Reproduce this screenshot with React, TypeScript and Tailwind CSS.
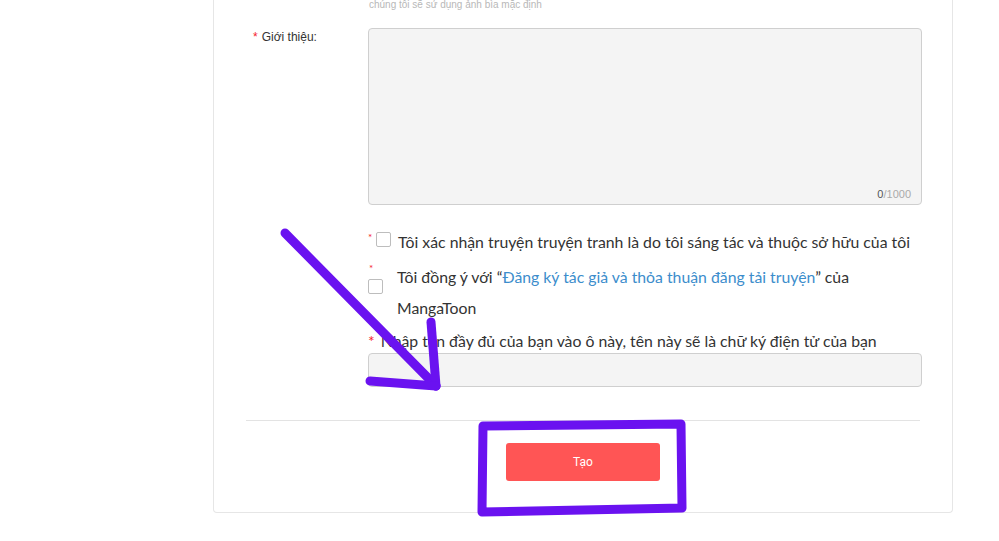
import React from "react";

const lato = { fontFamily: "Lato, 'Noto Sans', sans-serif" };

export default function App() {
  return (
    <div className="relative w-full h-[541px] bg-white overflow-hidden">
      <div className="ml-[213px] w-[740px] border border-t-0 border-[#e6e6e6] rounded-b-[4px] pb-[31px]">
        {/* top hint */}
        <div
          className="-mt-[2px] ml-[155px] text-[10px] leading-[13px] text-[#b8b8b8]"
          style={{ fontFamily: "'Liberation Sans', Arial, sans-serif" }}
        >
          chúng tôi sẽ sử dụng ảnh bìa mặc định
        </div>

        {/* Giới thiệu row */}
        <div className="flex mt-[17px]">
          <div
            className="w-[154px] pl-[39px] pt-[1px] text-[12px] leading-[16px] text-[#333]"
            style={{ fontFamily: "'Liberation Sans', Arial, sans-serif" }}
          >
            <span className="text-[#f5222d] mr-[4px]">*</span>Giới thiệu:
          </div>
          <div className="relative w-[554px] h-[177px] bg-[#f4f4f4] border border-[#cfcfcf] rounded-[4px]">
            <div
              className="absolute right-[10px] bottom-[3px] text-[11px] leading-[14px]"
              style={{ fontFamily: "'Liberation Sans', Arial, sans-serif" }}
            >
              <span className="text-[#555]">0</span>
              <span className="text-[#aaa]">/1000</span>
            </div>
          </div>
        </div>

        {/* Checkbox 1 */}
        <div className="ml-[154px] mt-[21px] flex items-center text-[15.8px] leading-[31px] text-[#333]" style={lato}>
          <span className="self-start mt-[4px] w-[8px] text-[#f5222d] text-[10px] leading-[14px]">*</span>
          <span className="w-[15px] h-[15px] border border-[#bdbdbd] rounded-[2px] bg-white mr-[7px] -mt-[5px]" />
          <span>Tôi xác nhận truyện truyện tranh là do tôi sáng tác và thuộc sở hữu của tôi</span>
        </div>

        {/* Checkbox 2 */}
        <div className="ml-[154px] mt-[4px] flex text-[15.8px] leading-[31px] text-[#333]" style={lato}>
          <div className="w-[29px] shrink-0 flex flex-col">
            <span className="text-[#f5222d] text-[10px] leading-[10px] ml-[1px] mt-[2px]">*</span>
            <span className="w-[15px] h-[15px] border border-[#bdbdbd] rounded-[2px] bg-white mt-[6px]" />
          </div>
          <p className="w-[520px]">
            {"Tôi đồng ý với “"}
            <span className="text-[#3c8dcc]">Đăng ký tác giả và thỏa thuận đăng tải truyện</span>
            {"” của MangaToon"}
          </p>
        </div>

        {/* Signature */}
        <div className="ml-[154px] mt-[8px] text-[15.8px] leading-[20px] text-[#333]" style={lato}>
          <span className="text-[#f5222d] mr-[6px]">*</span>Nhập tên đầy đủ của bạn vào ô này, tên này sẽ là chữ ký điện tử của bạn
        </div>
        <div className="ml-[154px] mt-[2px] w-[554px] h-[34px] bg-[#f4f4f4] border border-[#cfcfcf] rounded-[4px]" />

        {/* divider */}
        <div className="mx-[32px] mt-[33px] h-px bg-[#e3e3e3]" />

        {/* button */}
        <div className="flex justify-center mt-[22px]">
          <button
            className="w-[154px] h-[38px] bg-[#ff5555] rounded-[3px] text-white text-[12px]"
            style={{ fontFamily: "Roboto, 'Liberation Sans', sans-serif" }}
          >
            Tạo
          </button>
        </div>
      </div>

      {/* annotations */}
      <svg className="absolute inset-0 pointer-events-none" width="999" height="541" viewBox="0 0 999 541">
        <path
          d="M483 426 L681 424 L682 508 L482 512 Z"
          fill="none"
          stroke="#6a12f0"
          strokeWidth="9"
          strokeLinejoin="round"
        />
        <g stroke="#6a12f0" strokeWidth="9" strokeLinecap="round" fill="none">
          <line x1="285" y1="233" x2="436" y2="386" />
          <line x1="431" y1="322" x2="436" y2="386" />
          <line x1="370" y1="381" x2="436" y2="386" />
        </g>
      </svg>
    </div>
  );
}
